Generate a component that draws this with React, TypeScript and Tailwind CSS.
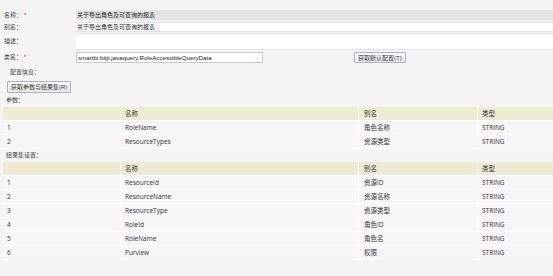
import { ChevronDown } from "lucide-react";

const params = [
  { no: 1, name: "RoleName", alias: "角色名称", type: "STRING" },
  { no: 2, name: "ResourceTypes", alias: "资源类型", type: "STRING" },
];

const results = [
  { no: 1, name: "ResourceId", alias: "资源ID", type: "STRING" },
  { no: 2, name: "ResourceName", alias: "资源名称", type: "STRING" },
  { no: 3, name: "ResourceType", alias: "资源类型", type: "STRING" },
  { no: 4, name: "RoleId", alias: "角色ID", type: "STRING" },
  { no: 5, name: "RoleName", alias: "角色名", type: "STRING" },
  { no: 6, name: "Purview", alias: "权限", type: "STRING" },
];

const formFont = { fontFamily: '"Liberation Sans", "Noto Sans CJK SC", sans-serif' };
const tableFont = { fontFamily: '"Open Sans", "Noto Sans CJK SC", sans-serif' };

function Label({ text, required }: { text: string; required?: boolean }) {
  return (
    <div className="flex w-[76px] shrink-0 items-center pl-[4px] text-[6px] text-[#444]">
      {text}：{required && <span className="ml-[2px] text-[#e02020]">*</span>}
    </div>
  );
}

function Btn({ children }: { children: string }) {
  return (
    <button className="flex h-full items-center rounded-[1px] border border-[#a9b3c2] bg-[linear-gradient(#fbfbfb,#e9e9e9)] px-[3px] text-[6px] leading-none text-[#333]">
      {children}
    </button>
  );
}

type Row = { no: number; name: string; alias: string; type: string };

function Table({ rows }: { rows: Row[] }) {
  return (
    <div className="ml-[3px] text-[6.5px] text-[#333]" style={tableFont}>
      <div className="flex h-[14px] border-b border-white bg-[#eeebd4]">
        <div className="w-[118px] border-r border-white" />
        <div className="flex w-[238px] items-center border-r border-white pl-[4px]">名称</div>
        <div className="flex w-[119px] items-center border-r border-white pl-[5px]">别名</div>
        <div className="flex flex-1 items-center pl-[4px]">类型</div>
      </div>
      {rows.map((r) => (
        <div key={r.no + r.name} className="flex h-[14px] border-b border-white bg-[#f6f6f6]">
          <div className="flex w-[118px] items-center border-r border-white pl-[4px]">{r.no}</div>
          <div className="flex w-[238px] items-center border-r border-white pl-[4px]">{r.name}</div>
          <div className="flex w-[119px] items-center border-r border-white pl-[5px]">{r.alias}</div>
          <div className="flex flex-1 items-center pl-[4px]">{r.type}</div>
        </div>
      ))}
    </div>
  );
}

export default function App() {
  return (
    <div className="h-[276px] w-[553px] overflow-hidden bg-[#f4f4f4] pt-[10px]" style={formFont}>
      <div className="flex h-[10px]">
        <Label text="名称" required />
        <div className="flex flex-1 items-center bg-[#e4e4e4] pl-[1px] text-[6px] text-[#222]">
          关于导出角色及可查询的报表
        </div>
      </div>
      <div className="mt-[2px] flex h-[10px]">
        <Label text="别名" />
        <div className="flex flex-1 items-center border-y border-[#e2e2e2] bg-white pl-[1px] text-[6px] text-[#222]">
          关于导出角色及可查询的报表
        </div>
      </div>
      <div className="mt-[1px] flex h-[17px]">
        <Label text="描述" />
        <div className="flex-1 border-y border-[#e2e2e2] bg-white" />
      </div>
      <div className="mt-[2px] flex h-[11px] items-stretch">
        <Label text="类名" required />
        <div className="flex w-[187px] items-center justify-between border border-[#c9c9c9] bg-white pl-[1px] pr-[2px] text-[6.2px] text-[#222]">
          <span>smartbi.bitjt.javaquery.RoleAccessibleQueryData</span>
          <ChevronDown size={6} strokeWidth={1.5} className="text-[#999]" />
        </div>
        <div className="ml-[91px]">
          <Btn>获取默认配置(T)</Btn>
        </div>
      </div>
      <div className="mt-[3px] flex h-[12px] items-center pl-[10px] text-[6px] text-[#444]">配置信息：</div>
      <div className="mt-[3px] h-[12px] pl-[7px]">
        <Btn>获取参数与结果集(R)</Btn>
      </div>
      <div className="mt-[1px] flex h-[13px] items-center pl-[6px] text-[6px] text-[#444]">参数：</div>
      <Table rows={params} />
      <div className="flex h-[13px] items-center pl-[6px] text-[6px] text-[#444]">结果集设置：</div>
      <Table rows={results} />
    </div>
  );
}
